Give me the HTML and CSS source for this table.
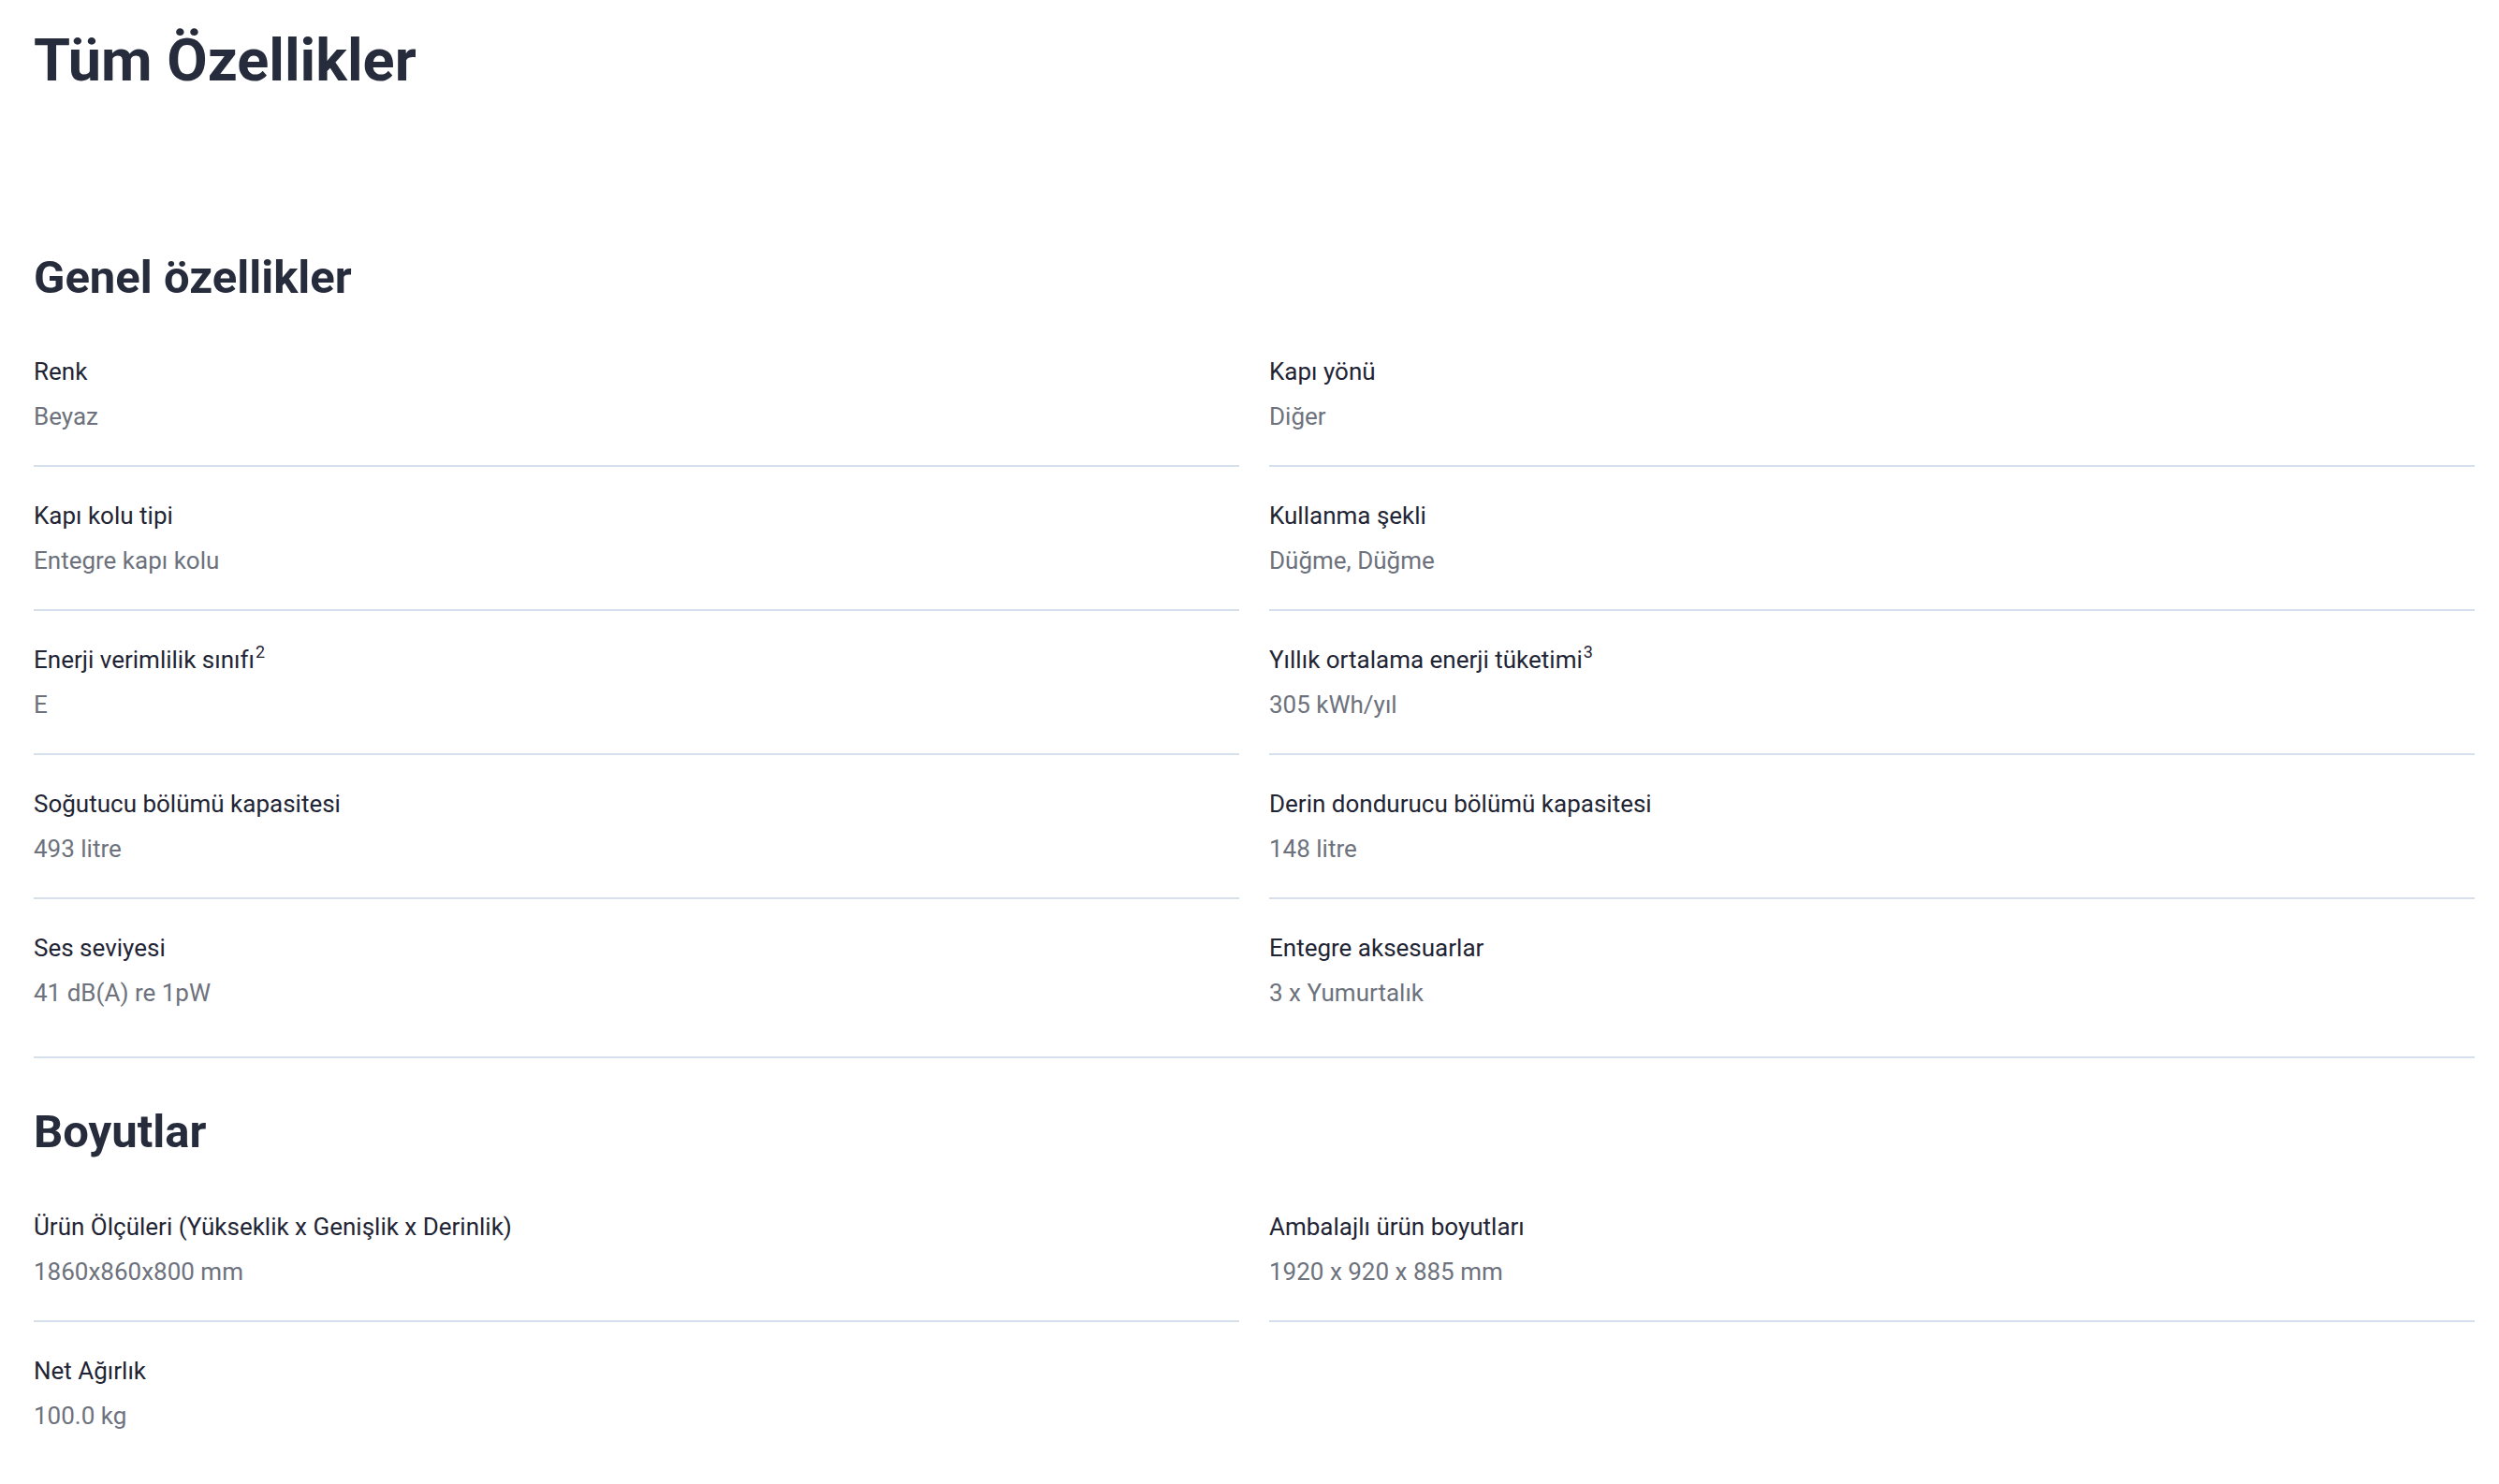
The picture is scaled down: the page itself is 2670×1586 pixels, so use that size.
FILE: index.html
```html
<!DOCTYPE html>
<html lang="tr">
<head>
<meta charset="utf-8">
<title>Tüm Özellikler</title>
<link rel="stylesheet" href="styles.css">
</head>
<body>
<main class="page">
  <h1 class="page-title">Tüm Özellikler</h1>

  <section class="spec-section">
    <h2 class="section-title">Genel özellikler</h2>
    <div class="spec-grid">
      <div class="spec"><div class="spec-label">Renk</div><div class="spec-value">Beyaz</div></div>
      <div class="spec"><div class="spec-label">Kapı yönü</div><div class="spec-value">Diğer</div></div>
      <div class="spec"><div class="spec-label">Kapı kolu tipi</div><div class="spec-value">Entegre kapı kolu</div></div>
      <div class="spec"><div class="spec-label">Kullanma şekli</div><div class="spec-value">Düğme, Düğme</div></div>
      <div class="spec"><div class="spec-label">Enerji verimlilik sınıfı<sup>2</sup></div><div class="spec-value">E</div></div>
      <div class="spec"><div class="spec-label">Yıllık ortalama enerji tüketimi<sup>3</sup></div><div class="spec-value">305 kWh/yıl</div></div>
      <div class="spec"><div class="spec-label">Soğutucu bölümü kapasitesi</div><div class="spec-value">493 litre</div></div>
      <div class="spec"><div class="spec-label">Derin dondurucu bölümü kapasitesi</div><div class="spec-value">148 litre</div></div>
      <div class="spec"><div class="spec-label">Ses seviyesi</div><div class="spec-value">41 dB(A) re 1pW</div></div>
      <div class="spec"><div class="spec-label">Entegre aksesuarlar</div><div class="spec-value">3 x Yumurtalık</div></div>
    </div>
  </section>

  <section class="spec-section spec-section--last">
    <h2 class="section-title">Boyutlar</h2>
    <div class="spec-grid">
      <div class="spec"><div class="spec-label">Ürün Ölçüleri (Yükseklik x Genişlik x Derinlik)</div><div class="spec-value">1860x860x800 mm</div></div>
      <div class="spec"><div class="spec-label">Ambalajlı ürün boyutları</div><div class="spec-value">1920 x 920 x 885 mm</div></div>
      <div class="spec"><div class="spec-label">Net Ağırlık</div><div class="spec-value">100.0 kg</div></div>
    </div>
  </section>
</main>
</body>
</html>
```

FILE: styles.css
```css
html, body {
  margin: 0;
  padding: 0;
  background: #ffffff;
}

body {
  font-family: Roboto, "Noto Sans", "Liberation Sans", sans-serif;
  color: #252b3b;
}

.page {
  padding: 27px 26px 0 36px;
}

.page-title {
  margin: 0 0 115px;
  font-size: 63px;
  line-height: 1.2;
  font-weight: 700;
  color: #262c3c;
}

.spec-section {
  padding: 50px 0 16px;
  border-bottom: 2px solid #d6e0ec;
}

.spec-section--last {
  border-bottom: none;
}

.section-title {
  margin: 0 0 19px;
  font-size: 49px;
  line-height: 1.2;
  font-weight: 700;
  color: #262c3c;
}

.spec-grid {
  display: grid;
  grid-template-columns: 1fr 1fr;
  column-gap: 32px;
}

.spec {
  padding: 28px 0 28px;
  border-bottom: 2px solid #d6e0ec;
}

.spec:last-child,
.spec:nth-last-child(2):nth-child(odd) {
  border-bottom: none;
}

.spec-label {
  font-size: 26px;
  line-height: 48px;
  color: #1f2535;
}

.spec-label sup {
  font-size: 18px;
  line-height: 0;
  vertical-align: 11px;
  margin-left: 1px;
}

.spec-value {
  font-size: 26px;
  line-height: 48px;
  color: #6d727d;
}
```
